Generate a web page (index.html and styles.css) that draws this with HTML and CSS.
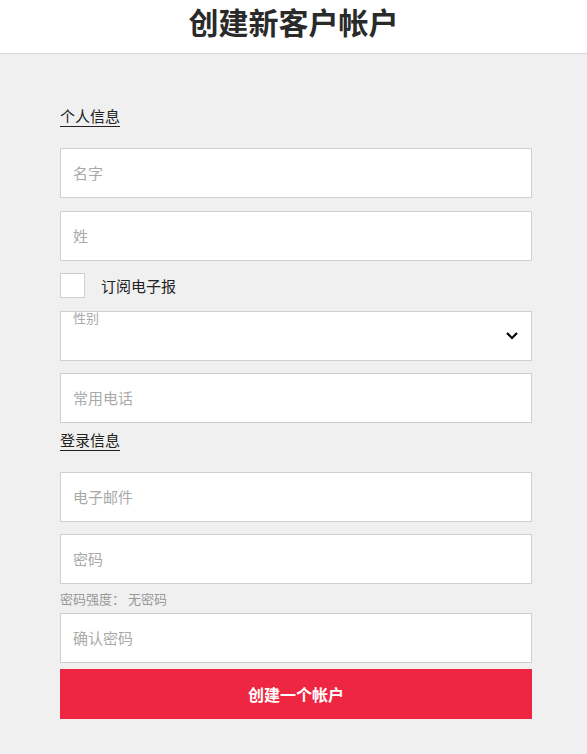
FILE: index.html
```html
<!DOCTYPE html>
<html lang="zh-CN">
<head>
    <meta charset="UTF-8">
    <meta name="viewport" content="width=device-width, initial-scale=1.0">
    <title>创建新客户帐户</title>
    <link rel="stylesheet" href="styles.css">
</head>
<body>
    <header class="page-header">
        <h1>创建新客户帐户</h1>
    </header>

    <main class="page">
        <form class="register-form">
            <h3 class="section-title">个人信息</h3>
            <input class="field first" type="text" placeholder="名字">
            <input class="field" type="text" placeholder="姓">

            <label class="check-row">
                <span class="check-box"></span>
                <span>订阅电子报</span>
            </label>

            <div class="select-wrap">
                <span class="select-label">性别</span>
                <svg class="chevron" width="14" height="10" viewBox="0 0 14 10">
                    <polyline points="2,2 7,7 12,2" fill="none" stroke="#000" stroke-width="2.2"/>
                </svg>
            </div>

            <input class="field phone" type="tel" placeholder="常用电话">

            <h3 class="section-title login">登录信息</h3>
            <input class="field first-login" type="email" placeholder="电子邮件">
            <input class="field password" type="password" placeholder="密码">
            <p class="strength">密码强度： 无密码</p>
            <input class="field confirm" type="password" placeholder="确认密码">

            <button type="button" class="submit">创建一个帐户</button>
        </form>
    </main>
</body>
</html>
```

FILE: styles.css
```css
* {
    box-sizing: border-box;
}
body {
    margin: 0;
    font-family: "Noto Sans CJK SC", "Noto Sans", sans-serif;
    background-color: #f0f0f0;
    color: #333;
}
.page-header {
    background: white;
    height: 54px;
    border-bottom: 1px solid #d6d6d6;
    text-align: center;
}
.page-header h1 {
    margin: 0;
    padding-top: 2px;
    font-size: 30px;
    line-height: 38px;
    font-weight: bold;
    color: #2a2a2a;
}
.page {
    padding: 53px 55px 40px 60px;
}
.register-form {
    display: flex;
    flex-direction: column;
    align-items: flex-start;
    width: 472px;
}
.section-title {
    margin: 0;
    font-size: 15px;
    font-weight: normal;
    line-height: 18px;
    color: #222;
    border-bottom: 1px solid #222;
    padding-bottom: 1px;
}
.field {
    width: 100%;
    height: 50px;
    margin-top: 13px;
    padding: 0 12px 2px;
    border: 1px solid #cfcfcf;
    background: white;
    font-family: inherit;
    font-size: 15px;
    color: #333;
    outline: none;
}
.field::placeholder {
    color: #a9a9a9;
}
.field.first {
    margin-top: 21px;
}
.check-row {
    display: flex;
    align-items: center;
    gap: 16px;
    margin-top: 12px;
    font-size: 15px;
    color: #222;
}
.check-box {
    width: 25px;
    height: 25px;
    background: white;
    border: 1px solid #cfcfcf;
}
.select-wrap {
    position: relative;
    width: 100%;
    height: 50px;
    margin-top: 13px;
    background: white;
    border: 1px solid #cfcfcf;
}
.select-label {
    position: absolute;
    left: 12px;
    top: -2px;
    font-size: 13px;
    line-height: 16px;
    color: #a9a9a9;
}
.chevron {
    position: absolute;
    right: 12px;
    top: 19px;
}
.field.phone {
    margin-top: 12px;
}
.section-title.login {
    margin-top: 8px;
}
.field.first-login {
    margin-top: 21px;
}
.field.password {
    margin-top: 12px;
}
.strength {
    margin: 6px 0 0;
    font-size: 13px;
    line-height: 17px;
    color: #999;
}
.field.confirm {
    margin-top: 6px;
}
.submit {
    width: 100%;
    height: 50px;
    margin-top: 6px;
    border: none;
    background: #ee2641;
    color: white;
    font-family: inherit;
    font-size: 16px;
    font-weight: bold;
}
```
